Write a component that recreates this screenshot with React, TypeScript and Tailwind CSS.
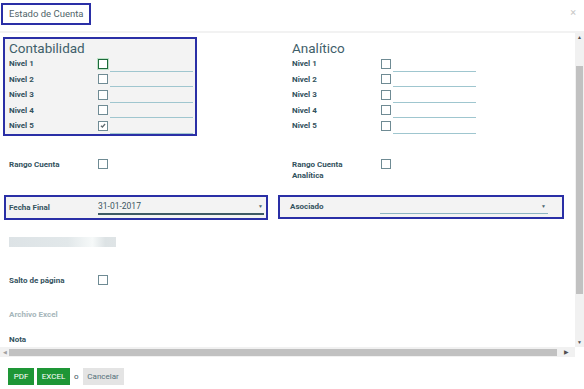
import React from "react";

const blue = "border-[#2a2fa6]";

const Check = ({ checked, focus }: { checked?: boolean; focus?: boolean }) => (
  <span
    className={`flex h-[10px] w-[10px] shrink-0 items-center justify-center border ${
      focus ? "border-[#1d6a3b] shadow-[0_0_0_1px_#bfe3c8]" : "border-[#6f8b94]"
    } bg-white`}
  >
    {checked && (
      <svg width="6" height="5" viewBox="0 0 7 6">
        <path d="M1 3.2 L2.8 4.8 L6 1.2" stroke="#5f6b70" strokeWidth="1.5" fill="none" />
      </svg>
    )}
  </span>
);

const Label = ({ children, muted }: { children: React.ReactNode; muted?: boolean }) => (
  <span className={`w-[89px] shrink-0 text-[8px] font-bold leading-[11px] ${muted ? "text-[#a6b6ba]" : "text-[#33525d]"}`}>
    {children}
  </span>
);

const NivelRow = ({ n, checked, focus }: { n: number; checked?: boolean; focus?: boolean }) => (
  <div className="flex h-[15.5px] items-center">
    <Label>Nivel {n}</Label>
    <Check checked={checked} focus={focus} />
    <span className="ml-[2px] h-[15.5px] w-[83px] self-end border-b border-[#9fc6cf]" />
  </div>
);

const Niveles = ({ title, boxed }: { title: string; boxed?: boolean }) => (
  <div
    className={`w-[194px] border-2 pl-[4px] ${boxed ? `${blue} bg-[#f3f3f3]` : "border-transparent"}`}
  >
    <div className="pt-[1px] text-[13.5px] leading-[16px] text-[#3f606a]">{title}</div>
    <NivelRow n={1} focus={boxed} />
    <NivelRow n={2} />
    <NivelRow n={3} />
    <NivelRow n={4} />
    <NivelRow n={5} checked={boxed} />
  </div>
);

const Caret = () => <span className="text-[5px] leading-none text-[#4d6770]">▼</span>;

export default function App() {
  return (
    <div className="flex h-[389px] w-[584px] flex-col overflow-hidden bg-white font-['Roboto',sans-serif]">
      <div className="flex h-[33px] shrink-0 items-start justify-between border-b-2 border-[#f2f2f2]">
        <div className={`ml-[1px] mt-[3px] border-2 ${blue} px-[6px] py-[3px] text-[9.5px] leading-[12px] text-[#4f6469]`}>
          Estado de Cuenta
        </div>
        <span className="mr-[8px] mt-[7px] text-[11px] leading-[12px] text-[#c8c8c8]">×</span>
      </div>

      <div className="flex h-[324px] shrink-0">
        <div className="flex w-[575px] flex-col">
          <div className="flex-1 overflow-hidden">
            <div className="mt-[4px] flex">
              <div className="ml-[3px] w-[283px]">
                <Niveles title="Contabilidad" boxed />
              </div>
              <Niveles title="Analítico" />
            </div>

            <div className="mt-[23px] flex">
              <div className="flex w-[283px] items-start pl-[9px]">
                <Label>Rango Cuenta</Label>
                <Check />
              </div>
              <div className="flex items-start pl-[9px]">
                <Label>
                  Rango Cuenta
                  <br />
                  Analítica
                </Label>
                <Check />
              </div>
            </div>

            <div className="mt-[14px] flex">
              <div className={`ml-[4px] flex h-[25px] w-[264px] items-center border-2 ${blue} bg-[#f3f3f3] pl-[3px]`}>
                <Label>Fecha Final</Label>
                <div className="flex h-[15px] w-[166px] items-center justify-between border-b-2 border-[#3d5a65] pr-[1px] text-[8.5px] text-[#3b5560]">
                  <span>31-01-2017</span>
                  <Caret />
                </div>
              </div>
              <div className={`ml-[10px] flex h-[24px] w-[286px] items-center border-2 ${blue} bg-[#f3f3f3] pl-[10px]`}>
                <Label>Asociado</Label>
                <div className="ml-[1px] flex h-[14px] w-[168px] items-center justify-end border-b border-[#8db5c1] pr-[2px]">
                  <Caret />
                </div>
              </div>
            </div>

            <div className="ml-[9px] mt-[17px] h-[10px] w-[107px] bg-[linear-gradient(90deg,#dde3e6_0%,#e2e8ea_55%,#f6f9f9_78%,#dde3e5_90%,#dfe4e6_100%)]" />

            <div className="mt-[28px] flex items-center pl-[9px]">
              <Label>Salto de página</Label>
              <Check />
            </div>

            <div className="mt-[23px] flex pl-[9px]">
              <Label muted>Archivo Excel</Label>
            </div>

            <div className="mt-[14px] flex pl-[9px]">
              <Label>Nota</Label>
            </div>
          </div>

          <div className="flex h-[10px] shrink-0 items-center bg-[#f1f1f1]">
            <span className="w-[9px] text-center text-[5px] leading-none text-[#a0a0a0]">◀</span>
            <div className="h-[7px] w-[548px] bg-[#c1c1c1]" />
            <span className="flex-1 text-center text-[6px] leading-none text-[#505050]">▶</span>
          </div>
        </div>

        <div className="flex w-[9px] flex-col">
          <div className="flex flex-1 flex-col items-center bg-[#f1f1f1]">
            <span className="mt-[2px] text-[5px] leading-none text-[#505050]">▲</span>
            <div className="mt-[26px] h-[228px] w-[7px] bg-[#c1c1c1]" />
            <span className="mt-auto mb-[2px] text-[5px] leading-none text-[#505050]">▼</span>
          </div>
          <div className="h-[10px] bg-white" />
        </div>
      </div>

      <div className="mt-[11px] flex items-center pl-[8px] text-[8px]">
        <button className="h-[17px] w-[26px] bg-[#1e9636] text-white">PDF</button>
        <button className="ml-[3px] h-[17px] w-[33px] bg-[#1e9636] text-white">EXCEL</button>
        <span className="ml-[4px] text-[#3b5560]">o</span>
        <button className="ml-[4px] h-[17px] w-[41px] bg-[#e4e4e4] text-[#55707a]">Cancelar</button>
      </div>
    </div>
  );
}
